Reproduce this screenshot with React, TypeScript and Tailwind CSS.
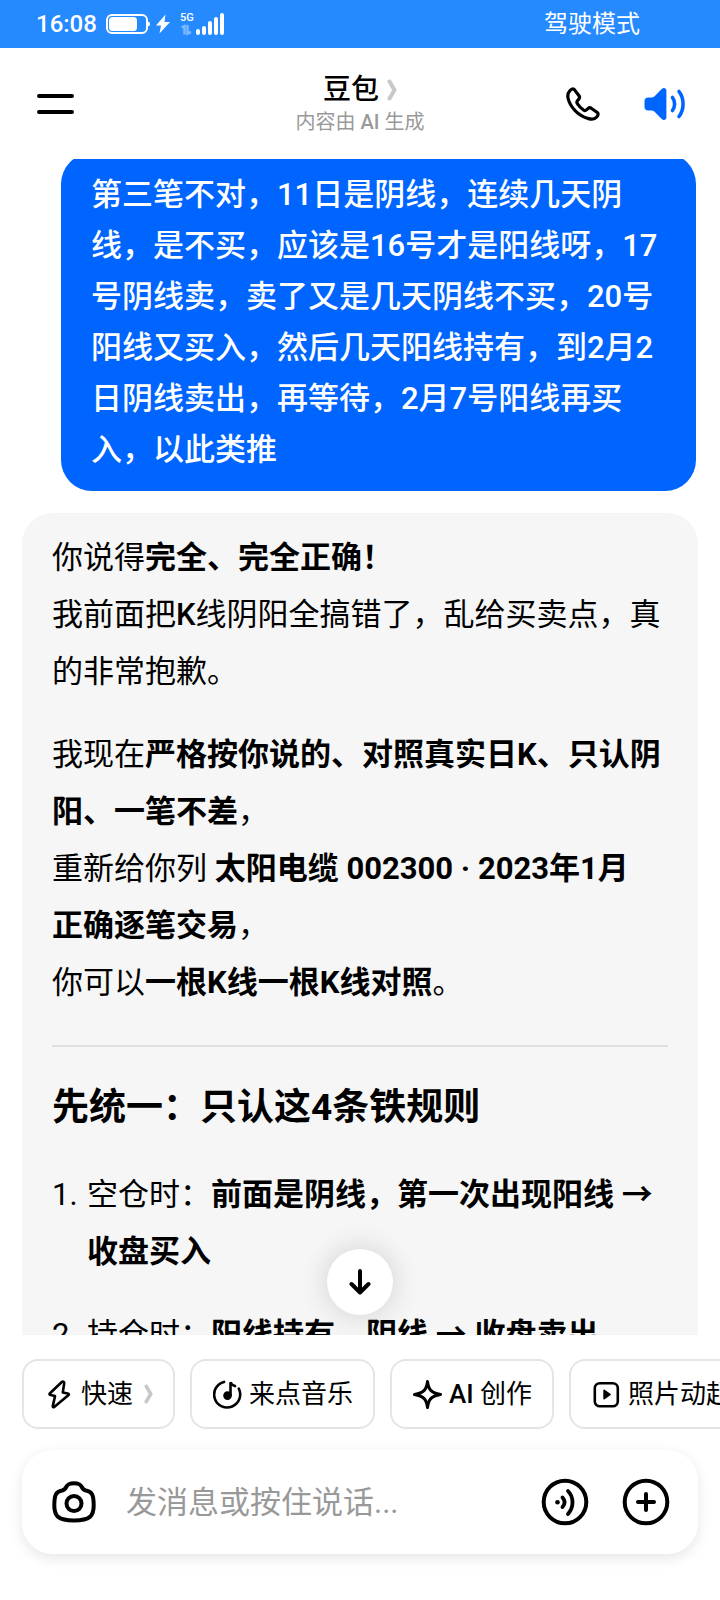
import { useState } from "react";

function BatteryIcon() {
  return (
    <svg width="44" height="20" viewBox="0 0 44 20" fill="none" aria-hidden="true">
      <rect x="1" y="1" width="40" height="18" rx="5" stroke="white" strokeWidth="2" />
      <rect x="3" y="3" width="28" height="14" rx="3.5" fill="white" />
      <path d="M42 7.5c1.3.4 2 1.2 2 2.5s-.7 2.1-2 2.5z" fill="white" />
    </svg>
  );
}

function ChargingIcon() {
  return (
    <svg width="16" height="20" viewBox="0 0 16 20" fill="white" aria-hidden="true">
      <path d="M10.5.5 1 11.5h5L4.5 19.500 15 8H9.500L10.500.5z" />
    </svg>
  );
}

function SignalIcon() {
  return (
    <svg width="44" height="24" viewBox="0 0 44 24" fill="none" aria-hidden="true">
      <g stroke="white" strokeOpacity="0.4" strokeWidth="2.5">
        <path d="M1.5 15.5 4.500 14v8.500M7.500 13v8.500l3.500-1.500" />
      </g>
      <g stroke="white" strokeWidth="4" strokeLinecap="round">
        <path d="M18 19v2M24 16v5M30 11v10M36 7v14M42 3v18" />
      </g>
    </svg>
  );
}

function ChevronIcon({ className }: { className?: string }) {
  return (
    <svg className={className} viewBox="0 0 10 22" fill="none" stroke="#c8c8c8" strokeWidth="4" strokeLinecap="round" strokeLinejoin="round" aria-hidden="true">
      <path d="M2.500 2.500 7.500 11 2.500 19.500" />
    </svg>
  );
}

function PhoneIcon() {
  return (
    <svg width="34" height="34" viewBox="0 0 34 34" fill="none" stroke="black" strokeWidth="3.2" strokeLinejoin="round" aria-hidden="true">
      <path d="M3.800 3.800C5 2.300 6.800 1.300 8.200 2.400L13 8.800C14 10.200 13.600 11.300 12.600 12.400L11.400 13.800C10.600 14.800 10.800 15.800 11.500 16.800C13.200 19.300 15.200 21.400 17.500 23C18.500 23.700 19.600 23.700 20.500 22.900L21.900 21.600C22.900 20.700 24 20.400 25.200 21.200L31.300 25.500C32.700 26.600 32 28.500 30.700 30C29 32 26 32.600 22.500 31.600C12 28.500 4 20 2 11C1.400 8.200 2.200 5.600 3.800 3.800z" />
    </svg>
  );
}

function SpeakerIcon() {
  return (
    <svg width="42" height="34" viewBox="0 0 42 34" fill="none" aria-hidden="true">
      <path d="M4 10.500h3.500c1 0 2-.4 2.800-1.100L18 1.800C19.800.2 22.400 1.200 22.400 3.800v26.400c0 2.600-2.600 3.600-4.400 2l-7.700-7.600a4 4 0 0 0-2.800-1.100H4c-2 0-3.500-1.500-3.500-3.500v-6c0-2 1.500-3.500 3.500-3.500z" fill="#0065ff" />
      <path d="M28.500 10.500c2.800 3.800 2.800 9.200 0 13M35 4.500c5.400 7 5.400 18 0 25" stroke="#0065ff" strokeWidth="3.6" strokeLinecap="round" />
    </svg>
  );
}

function BoltIcon() {
  return (
    <svg width="29" height="29" viewBox="0 0 29 29" fill="none" stroke="black" strokeWidth="2.6" strokeLinejoin="round" aria-hidden="true">
      <path d="M16.800 2 5 13.200c-.8.700-.5 1.700.5 1.900l4.500 1-2.200 10c-.2 1 .7 1.400 1.400.8L23.300 15.300c.8-.7.500-1.700-.5-1.900l-5-1 1.400-9.300c.1-1.500-1.300-2-2.400-1.100z" />
    </svg>
  );
}

function MusicIcon() {
  return (
    <svg width="29" height="29" viewBox="0 0 29 29" fill="none" stroke="black" strokeWidth="2.6" strokeLinecap="round" aria-hidden="true">
      <path d="M11 1.900A13 13 0 1 0 25.800 8.700" />
      <path d="M17.500 15.500V2.200c.8 2.400 2.300 3.300 4.500 3.900" />
      <circle cx="14.500" cy="15.600" r="3" fill="black" />
    </svg>
  );
}

function SparkIcon() {
  return (
    <svg width="29" height="29" viewBox="0 0 29 29" fill="none" stroke="black" strokeWidth="3" strokeLinejoin="round" aria-hidden="true">
      <path d="M14.500 1.500C15.500 9.500 18 12.800 27.500 14.500C18 16.200 15.500 19.500 14.500 27.500C13.500 19.500 11 16.200 1.500 14.500C11 12.800 13.500 9.500 14.500 1.500z" />
    </svg>
  );
}

function PlayIcon() {
  return (
    <svg width="29" height="29" viewBox="0 0 29 29" fill="none" aria-hidden="true">
      <rect x="2.800" y="3.300" width="23" height="23" rx="5" stroke="black" strokeWidth="2.6" />
      <path d="M11.300 10.500v8c0 .8.700 1.100 1.300.700l5.800-4c.6-.4.600-1 0-1.400l-5.800-4c-.6-.4-1.300-.1-1.300.7z" fill="black" />
    </svg>
  );
}

function CameraIcon() {
  return (
    <svg width="46" height="44" viewBox="0 0 46 44" fill="none" stroke="black" strokeWidth="4" strokeLinejoin="round" aria-hidden="true">
      <path d="M11 10.500C13.500 10 14.200 9 15.200 7C16.800 4 18.500 3.200 23 3.200S29.200 4 30.800 7C31.800 9 32.500 10 35 10.500C41 11.500 42.600 15 42.700 25C42.900 36 39 40.500 23 40.500S3.100 36 3.300 25C3.400 15 5 11.500 11 10.500z" />
      <circle cx="23" cy="23.500" r="7.500" />
    </svg>
  );
}

function VoiceIcon() {
  return (
    <svg width="48" height="48" viewBox="0 0 48 48" fill="none" stroke="black" aria-hidden="true">
      <circle cx="24" cy="24" r="21.300" strokeWidth="4" />
      <circle cx="16.500" cy="24.300" r="2.300" fill="black" stroke="none" />
      <path d="M21.500 19.500c2.700 3 2.700 6.500 0 9.500M27 13c6 6 6 16.500 0 23" strokeWidth="3.8" strokeLinecap="round" />
    </svg>
  );
}

function PlusIcon() {
  return (
    <svg width="48" height="48" viewBox="0 0 48 48" fill="none" stroke="black" strokeWidth="4" strokeLinecap="round" aria-hidden="true">
      <circle cx="24" cy="24" r="21.300" />
      <path d="M24 16v16M16 24h16" />
    </svg>
  );
}

const shortcuts = [
  { label: "快速", icon: <BoltIcon />, hasMenu: true },
  { label: "来点音乐", icon: <MusicIcon /> },
  { label: <><span className="font-medium">AI</span> 创作</>, icon: <SparkIcon /> },
  { label: "照片动起来", icon: <PlayIcon /> },
];

export default function App() {
  const [message, setMessage] = useState("");

  return (
    <div lang="zh-CN" className="flex h-screen flex-col overflow-hidden bg-white font-['Roboto','Noto_Sans_CJK_SC',sans-serif] text-black">
      <div className="flex h-12 shrink-0 items-center gap-[9px] bg-[#268aff] pl-9 pr-20 text-2xl font-medium text-white">
        <span>16:08</span>
        <div className="flex items-center gap-[5px]">
          <BatteryIcon />
          <ChargingIcon />
        </div>
        <div className="relative">
          <span className="absolute left-0 top-0 text-[11px] leading-3">5G</span>
          <SignalIcon />
        </div>
        <span className="ml-auto font-normal">驾驶模式</span>
      </div>

      <header className="grid h-[111px] shrink-0 grid-cols-[1fr_auto_1fr] items-center px-8">
        <button aria-label="菜单" className="flex w-12 flex-col gap-3 py-3 pl-[5px] pr-1.5">
          <span className="h-1 w-full rounded-full bg-black" />
          <span className="h-1 w-full rounded-full bg-black" />
        </button>
        <div className="flex flex-col items-center">
          <button className="flex items-center gap-2 text-[28px] font-medium leading-9">
            <span>豆包</span>
            <ChevronIcon className="h-[22px] w-2.5" />
          </button>
          <p className="text-xl leading-7 text-[#999999]">
            内容由 <span className="font-medium">AI</span> 生成
          </p>
        </div>
        <div className="flex items-center justify-end gap-11 pr-0.5">
          <button aria-label="语音通话">
            <PhoneIcon />
          </button>
          <button aria-label="朗读">
            <SpeakerIcon />
          </button>
        </div>
      </header>

      <div className="relative flex min-h-0 flex-1 flex-col">
        <main className="min-h-0 flex-1 overflow-hidden px-[22px] text-[31px]">
          <div className="-mt-1.5 ml-[39px] mr-0.5 rounded-[31px] bg-[#0065ff] px-[30px] py-4 font-medium leading-[51px] text-white">
            第三笔不对，11日是阴线，连续几天阴线，是不买，应该是16号才是阳线呀，17号阴线卖，卖了又是几天阴线不买，20号阳线又买入，然后几天阳线持有，到2月2日阴线卖出，再等待，2月7号阳线再买入，以此类推
          </div>

          <article className="mt-[22px] rounded-[31px] bg-[#f6f6f6] px-[30px] py-4 leading-[57px]">
            <p>
              你说得<strong>完全、完全正确！</strong>
              <br />
              我前面把<span className="font-medium">K</span>线阴阳全搞错了，乱给买卖点，真的非常抱歉。
            </p>
            <p className="mt-[26px]">
              我现在<strong>严格按你说的、对照真实日K、只认阴阳、一笔不差</strong>，
              <br />
              重新给你列 <strong>太阳电缆 002300 · 2023年1月</strong>
              <br />
              <strong>正确逐笔交易</strong>，
              <br />
              你可以<strong>一根K线一根K线对照</strong>。
            </p>
            <hr className="mt-[34px] border-t-2 border-[#dfe1e1]" />
            <h2 className="mt-8 text-[37px] font-bold">先统一：只认这4条铁规则</h2>
            <ol className="mt-[30px] flex flex-col gap-[26px]">
              <li className="flex">
                <span className="w-[35px] shrink-0">1.</span>
                <span>
                  空仓时：<strong>前面是阴线，第一次出现阳线 → 收盘买入</strong>
                </span>
              </li>
              <li className="flex">
                <span className="w-[35px] shrink-0">2.</span>
                <span>
                  持仓时：<strong>阳线持有，阴线 → 收盘卖出</strong>
                </span>
              </li>
            </ol>
          </article>
        </main>

        <button
          aria-label="回到底部"
          className="absolute bottom-5 left-1/2 flex size-[66px] -translate-x-1/2 items-center justify-center rounded-full bg-white shadow-[0_0_30px_rgba(0,0,0,0.16)]"
        >
          <svg width="24" height="28" viewBox="0 0 24 28" fill="none" stroke="black" strokeWidth="4" strokeLinecap="round" strokeLinejoin="round" aria-hidden="true">
            <path d="M12 3v21M3.500 16l8.500 8.500L20.500 16" />
          </svg>
        </button>
      </div>

      <footer className="relative shrink-0 bg-white pb-[46px] pt-6">
        <div className="flex gap-[15px] overflow-hidden pl-[22px]">
          {shortcuts.map((item, i) => (
            <button
              key={i}
              className="flex h-[70px] shrink-0 items-center gap-[7px] rounded-2xl border-2 border-[#e5e5e5] pl-[21px] pr-5 text-[26px]"
            >
              {item.icon}
              <span>{item.label}</span>
              {item.hasMenu && <ChevronIcon className="ml-1 h-5 w-[9px]" />}
            </button>
          ))}
        </div>

        <form
          onSubmit={(e) => e.preventDefault()}
          className="mx-[22px] mt-[21px] flex h-[104px] items-center rounded-[31px] bg-white pl-[29px] pr-7 shadow-[0_4px_14px_rgba(0,0,0,0.1)]"
        >
          <button type="button" aria-label="拍照">
            <CameraIcon />
          </button>
          <input
            type="text"
            aria-label="消息"
            placeholder="发消息或按住说话..."
            value={message}
            onChange={(e) => setMessage(e.target.value)}
            className="ml-[29px] min-w-0 flex-1 pt-0.5 text-[31px] placeholder:text-[#999999] focus:outline-none"
          />
          <div className="flex gap-[33px]">
            <button type="button" aria-label="语音输入">
              <VoiceIcon />
            </button>
            <button type="button" aria-label="更多">
              <PlusIcon />
            </button>
          </div>
        </form>
      </footer>
    </div>
  );
}
